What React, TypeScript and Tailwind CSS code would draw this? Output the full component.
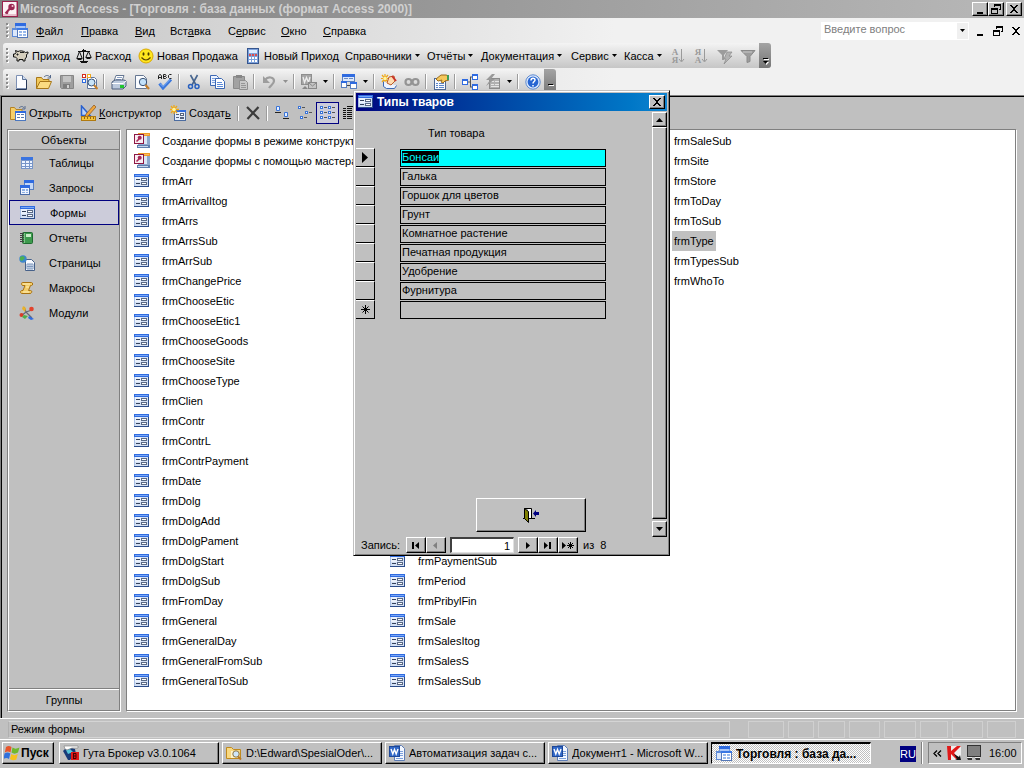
import { useEffect, useRef } from "react";
import type { ReactNode } from "react";

const raised =
  "border border-t-white border-l-white border-r-black border-b-black shadow-[inset_-1px_-1px_0_#808080] bg-[#c0c0c0]";

function Icon({ children, size = 16 }: { children: ReactNode; size?: number }) {
  return (
    <svg width={size} height={size} viewBox="0 0 16 16" aria-hidden="true" className="shrink-0">
      {children}
    </svg>
  );
}

const FormIcon = () => (
  <Icon>
    <path d="M0 1h15v13H0z" fill="#a9c0e6" />
    <path d="M1 4h13v9H1z" fill="#d3e0f5" />
    <path d="M1 4h6v5H1z" fill="#eaf1fc" />
    <path d="M0 1h15v3H0z" fill="#2f6be0" />
    <path d="M1 2h13v1H1z" fill="#7aa7f6" />
    <path d="M2 6h4v1H2zM2 10h4v1H2z" fill="#33415c" />
    <path d="M7 5h6v3H7zM7 9h6v3H7z" fill="#5b6a86" />
    <path d="M8 6h4v1H8zM8 10h4v1H8z" fill="#fff" />
    <path d="M0 13h15v1H0zM14 4h1v10h-1z" fill="#2c4d8a" />
  </Icon>
);

const WizardIcon = () => (
  <Icon>
    <path d="M4 0h12v3H4z" fill="#f09a28" />
    <path d="M5 1h10v1H5z" fill="#f9bb62" />
    <path d="M4 3h12v9H4z" fill="#8ea8cc" />
    <path d="M5 3h8v8H5z" fill="#dce7f6" />
    <path d="M3 12h13v3H3z" fill="#5f7fae" />
    <path d="M4 13h10v1H4z" fill="#c9d8ee" />
    <path d="M0 1h10v10H0z" fill="#8c1745" />
    <path d="M1 2h8v8H1z" fill="#f8eef2" />
    <circle cx="5.700" cy="4.800" r="2" fill="#a92858" />
    <path d="M5 6L2.500 8.500" stroke="#a92858" strokeWidth="1.600" />
  </Icon>
);

const AccessIcon = () => (
  <Icon>
    <rect x=".5" y=".5" width="15" height="15" fill="#fbf2f5" stroke="#99204c" />
    <path d="M1 14h14M14.500 1v14" stroke="#d58ca6" />
    <circle cx="9.500" cy="6" r="3.200" fill="#9c2752" />
    <circle cx="10.500" cy="5" r="1" fill="#f3c6d5" />
    <path d="M7.500 8L3.500 12.500M4 11l2 1.500" stroke="#9c2752" strokeWidth="2" />
  </Icon>
);

const DatabaseIcon = () => (
  <Icon>
    <path d="M3 0h11v10H3z" fill="#6f9be6" />
    <path d="M3 0h11v3H3z" fill="#2f6be0" />
    <path d="M4 3h9v6H4z" fill="#a9c6f6" />
    <path d="M0 5h6v9H0z" fill="#5d8ad8" />
    <path d="M1 7h5v6H1z" fill="#dce8fb" />
    <path d="M5 5h11v10H5z" fill="#5478b8" />
    <path d="M5 5h11v2H5z" fill="#3a78e4" />
    <path d="M6 7h9v7H6z" fill="#fff" />
    <path d="M7 8h3v2H7zM11 8h3v2h-3zM7 11h3v2H7zM11 11h3v2h-3z" fill="#98b9ec" />
  </Icon>
);

const TableIcon = () => (
  <Icon>
    <path d="M2 2h12v12H2z" fill="#7795c8" />
    <path d="M2 2h12v3H2z" fill="#3a74e0" />
    <path d="M3 6h3v2H3zM7 6h3v2H7zM11 6h2v2h-2zM3 9h3v2H3zM7 9h3v2H7zM11 9h2v2h-2zM3 12h3v1H3zM7 12h3v1H7zM11 12h2v1h-2z" fill="#eef4ff" />
  </Icon>
);

const QueryIcon = () => (
  <Icon>
    <path d="M5 0h10v10H5z" fill="#5a80c0" />
    <path d="M5 0h10v3H5z" fill="#2f6be0" />
    <path d="M6 3h8v6H6z" fill="#c5d8f6" />
    <path d="M1 5h10v10H1z" fill="#4a6ba6" />
    <path d="M1 5h10v3H1z" fill="#2f6be0" />
    <path d="M2 8h8v6H2z" fill="#eef4ff" />
    <path d="M3 9h3v2H3zM7 9h2v2H7zM3 12h3v1H3zM7 12h2v1H7z" fill="#8eb0e4" />
  </Icon>
);

const ReportIcon = () => (
  <Icon>
    <rect x="3.500" y="2.500" width="10" height="11" rx="1" fill="#3d9a4d" stroke="#1f6b30" />
    <rect x="7" y="4" width="5" height="3" fill="#c9ecc8" />
    <path d="M5.500 3v10" stroke="#7cc686" />
    <path d="M1 3.500h4M1 5.500h4M1 7.500h4M1 9.500h4M1 11.500h4" stroke="#444" />
  </Icon>
);

const PageIcon = () => (
  <Icon>
    <path d="M6.500 4.500h6l3 3v8h-9z" fill="#f7faff" stroke="#476189" />
    <path d="M8 9h6v5H8zM8 11.500h6M10 9v5M12 9v5" fill="none" stroke="#7e98bd" />
    <circle cx="4" cy="4" r="3.700" fill="#3c86cc" />
    <path d="M1 2l3-1 2 2-3 3-2-1z" fill="#4cb050" />
  </Icon>
);

const MacroIcon = () => (
  <Icon>
    <path d="M3.500 2.500h9c1.500 0 1.500 3 0 3h-1l-2 5h2c2 0 1.500 3-.5 3H3c-2 0-2-3 0-3h1l2-5H4c-2 0-2-3-.5-3z" fill="#f3cd6b" stroke="#a87212" />
    <path d="M4 4h7M7 7h3M4 12h6" stroke="#fff0b8" />
  </Icon>
);

const ModuleIcon = () => (
  <Icon>
    <path d="M2 11l5-4 6 6M7 7L5 2M7 7l6-2" stroke="#667" strokeWidth="1.300" fill="none" />
    <path d="M4 1l3 2-1 4-3-3z" fill="#e8b22c" />
    <circle cx="12.500" cy="4" r="2.300" fill="#e2432c" />
    <circle cx="2.500" cy="10" r="2" fill="#d83c28" />
    <path d="M5 10l4 1-3 3-3-2z" fill="#4fae4b" />
    <path d="M10 11l5 3-3 1-3-2z" fill="#2f6be0" />
  </Icon>
);

const PigIcon = () => (
  <Icon>
    <path d="M3 4.500L2.500 2.500 5 3.500C7 2.500 10 2.500 12.500 4.500L15 4v1.500l-1.500 1V9L12 11v2h-2v-1.500H6V13H4v-2.500L2.500 9H.5V6H2z" fill="#d6cfbe" stroke="#111" />
    <path d="M4 6h1v1H4zM7 4.500h4" stroke="#222" />
  </Icon>
);

const ScalesIcon = () => (
  <Icon>
    <path d="M7.500 1v12M2 3.500h12M5 14.500h6M3.500 3.500L1 10M3.500 3.500L6 10M12.500 3.500L10 9M12.500 3.500L15 9" stroke="#111" fill="none" />
    <path d="M0 10h7l-2 2H2zM9 9h7l-2 2h-3zM6 2h4v2H6zM4 13h8v1H4z" fill="#111" />
  </Icon>
);

const SmileIcon = () => (
  <Icon>
    <circle cx="8" cy="8" r="7" fill="#ffe61e" stroke="#d9a800" />
    <ellipse cx="5.500" cy="6" rx="1" ry="1.700" fill="#4a3a00" />
    <ellipse cx="10.500" cy="6" rx="1" ry="1.700" fill="#4a3a00" />
    <path d="M3.500 9.500q4.500 5 9 0" stroke="#5a4200" fill="none" strokeWidth="1.200" />
  </Icon>
);

const CalcIcon = () => (
  <Icon>
    <rect x="2.500" y=".5" width="11" height="15" fill="#7da2dc" stroke="#35558e" />
    <rect x="4" y="2" width="8" height="3" fill="#dcebff" />
    <path d="M4 6h2v2H4zM7 6h2v2H7zM10 6h2v2h-2z" fill="#dc4c4c" />
    <path d="M4 9h2v2H4zM7 9h2v2H7zM10 9h2v2h-2zM4 12h2v2H4zM7 12h2v2H7zM10 12h2v2h-2z" fill="#fff" />
  </Icon>
);

const SortIcon = ({ top, bottom }: { top: string; bottom: string }) => (
  <span className="flex items-center text-[#9a9a9a]">
    <span className="flex flex-col font-['Liberation_Serif',serif] text-[9px] leading-[8px] font-bold">
      <span>{top}</span>
      <span>{bottom}</span>
    </span>
    <svg width="7" height="16" viewBox="0 0 7 16" aria-hidden="true">
      <path d="M3.500 1v12M1 11l2.500 3L6 11" stroke="#9a9a9a" fill="none" />
    </svg>
  </span>
);

const FilterFlashIcon = () => (
  <Icon>
    <path d="M0 2h11L7 7v5H5V7z" fill="#9c9c9c" />
    <path d="M10 4h5l-3 4h3l-8 8 2-5H7z" fill="#b2b2b2" stroke="#8a8a8a" strokeWidth=".7" />
  </Icon>
);

const FilterIcon = () => (
  <Icon>
    <path d="M1 2.500h14L10 8.500v5l-3 1v-6z" fill="#9c9c9c" stroke="#8a8a8a" />
    <path d="M3 4h9" stroke="#c9c9c9" />
  </Icon>
);

const NewPageIcon = () => (
  <Icon>
    <path d="M3.500 1.500h6l4 4v9h-10z" fill="#fbfcff" stroke="#7d90b4" />
    <path d="M9.500 1.500v4h4" fill="#cfdcf2" stroke="#5a7095" />
    <path d="M3 15.500h10.500V6" stroke="#27395a" fill="none" />
  </Icon>
);

const FolderIcon = () => (
  <Icon>
    <path d="M.5 14.500v-11h5l1.500 2h6v3" fill="#f2c95a" stroke="#a7771a" />
    <path d="M.5 14.500L4 7.500h11.500l-3 7z" fill="#fbdc82" stroke="#a7771a" />
    <path d="M8 3c2-2 4-2 6 0M14.500 1v3h-3" stroke="#54698c" fill="none" />
  </Icon>
);

const SaveIcon = () => (
  <Icon>
    <path d="M1.500 1.500h13v13h-12l-1-1z" fill="#9e9e9e" stroke="#868686" />
    <path d="M4 2h8v6H4z" fill="#c4c4c4" />
    <path d="M4 10h7v4H4z" fill="#7e7e7e" />
    <path d="M8 11h2v3H8z" fill="#d0d0d0" />
  </Icon>
);

const FileSearchIcon = () => (
  <Icon>
    <path d="M5.500 3.500h7l2 2v9h-9z" fill="#fff" stroke="#62779c" />
    <path d="M0 0h4v4H0z" fill="#d62b1e" />
    <path d="M5 0h4v4H5z" fill="#f0a81e" />
    <path d="M0 5h4v4H0z" fill="#2f6be0" />
    <path d="M1 1h2v2H1zM6 1h2v2H6zM1 6h2v2H1z" fill="#fff" />
    <circle cx="9.500" cy="8.500" r="3.500" fill="#c9e4f8" stroke="#36517a" />
    <path d="M12 11l3.500 4" stroke="#c5802c" strokeWidth="2" />
  </Icon>
);

const PrintIcon = () => (
  <Icon>
    <path d="M5 1.500h8L11 7H3z" fill="#fff" stroke="#657792" />
    <path d="M6 3.500h5M5 5.500h5" stroke="#8aa0c4" />
    <path d="M1 8l3-2h9l2 1v5l-3 3H1z" fill="#bccadd" stroke="#4d5f7c" />
    <path d="M1 9.500h11l3-2.500" stroke="#fff" fill="none" />
    <path d="M9 11h4v3H9z" fill="#22c52e" />
  </Icon>
);

const PreviewIcon = () => (
  <Icon>
    <path d="M1.500 1.500h8l3 3v10h-11z" fill="#fafcff" stroke="#657792" />
    <circle cx="9" cy="8" r="3.700" fill="#c3e2fa" stroke="#3c5376" />
    <path d="M11.500 11l3.500 4" stroke="#c5802c" strokeWidth="2.200" />
  </Icon>
);

const SpellIcon = () => (
  <Icon>
    <path d="M1.500 5V2l1-1.500h1l1 1.500v3M2 3.500h3M6.500 .5v4h2l1-1-1-1h-2M8.500 2.500l.5-1-.5-1h-2M14.500 .5h-2l-1 1v2l1 1h2" fill="none" stroke="#222" />
    <path d="M2.500 9.500L6 14l8-8.500" fill="none" stroke="#3c78dc" strokeWidth="3" />
    <path d="M3 9.500L6 12.500l7-7" fill="none" stroke="#8bb7f6" />
  </Icon>
);

const CutIcon = () => (
  <Icon>
    <path d="M4.500 1L10 11M11.500 1L6 11" stroke="#47658f" strokeWidth="1.600" />
    <circle cx="4.500" cy="12.500" r="2" fill="none" stroke="#2860bf" strokeWidth="1.500" />
    <circle cx="11" cy="12.500" r="2" fill="none" stroke="#2860bf" strokeWidth="1.500" />
  </Icon>
);

const CopyIcon = () => (
  <Icon>
    <path d="M1.500 1.500h6l2 2v8h-8z" fill="#eef4ff" stroke="#3c68b4" />
    <path d="M3 4.500h4M3 6.500h4M3 8.500h4" stroke="#7ca0dc" />
    <path d="M6.500 4.500h6l3 3v7h-9z" fill="#fff" stroke="#3c68b4" />
    <path d="M8 8.500h5M8 10.500h6M8 12.500h6" stroke="#5c8ad8" />
  </Icon>
);

const PasteIcon = () => (
  <Icon>
    <path d="M1.500 2.500h11v12h-11z" fill="#a2a2a2" stroke="#8a8a8a" />
    <path d="M4 1h6v3H4z" fill="#868686" />
    <path d="M7.500 6.500h6l2 2v7h-8z" fill="#c8c8c8" stroke="#909090" />
    <path d="M9 9.500h4M9 11.500h5M9 13.500h5" stroke="#969696" />
  </Icon>
);

const UndoIcon = () => (
  <Icon>
    <path d="M4 6c3-4 9-3 9 1 0 3-3 4-5 7" stroke="#9d9d9d" strokeWidth="2.200" fill="none" />
    <path d="M2 2v7h7z" fill="#9d9d9d" />
  </Icon>
);

const OfficeLinkIcon = () => (
  <Icon>
    <rect x="0" y="0" width="11" height="11" fill="#8e8e8e" />
    <path d="M1 1h9v9H1z" fill="#a6a6a6" />
    <path d="M2 3l1.500 5.500 2-5 2 5L9 3" stroke="#eee" strokeWidth="1.300" fill="none" />
    <rect x="7.500" y="8.500" width="8" height="6" fill="#c4c4c4" stroke="#888" />
    <path d="M8 9l3.500 3L15 9" stroke="#888" fill="none" />
    <path d="M4 12l3 3H1z" fill="#888" />
  </Icon>
);

const RelationIcon = () => (
  <Icon>
    <path d="M1 0h13v8H1z" fill="#5a80c0" />
    <path d="M1 0h13v3H1z" fill="#2f6be0" />
    <path d="M2 3h11v4H2z" fill="#dbe7fa" />
    <path d="M3 4h4v1H3zM8 4h4v1H8z" fill="#6e8cc0" />
    <path d="M0 7h6v7H0zM9 8h7v7H9z" fill="#5a80c0" />
    <path d="M0 7h6v2H0zM9 8h7v2H9z" fill="#2f6be0" />
    <path d="M1 9h4v4H1zM10 10h5v4h-5z" fill="#fff" />
    <path d="M6 11.500h3" stroke="#444" />
  </Icon>
);

const NewObjectIcon = () => (
  <Icon>
    <path d="M4 0v9M0 4.500h9M1 1l6 7M7 1L1 8" stroke="#f0a818" strokeWidth="1.200" />
    <circle cx="4" cy="4.500" r="1.700" fill="#fff6a0" />
    <path d="M2.500 7.500v5l3 2h8l2-3" fill="#eef4ff" stroke="#3c68b4" />
    <path d="M8 3l5-1 1 5-4 4-4-2z" fill="#ffdcb0" stroke="#bc5c2a" />
    <path d="M11 2l4 5" stroke="#c8332a" strokeWidth="2" />
  </Icon>
);

const LinkIcon = () => (
  <Icon>
    <circle cx="4.500" cy="8" r="3" fill="none" stroke="#949494" strokeWidth="2.200" />
    <circle cx="11.500" cy="8" r="3" fill="none" stroke="#949494" strokeWidth="2.200" />
  </Icon>
);

const PropertiesIcon = () => (
  <Icon>
    <rect x="1.500" y="4.500" width="11" height="11" fill="#f6f9ff" stroke="#4d6894" />
    <path d="M3 9.500h2M6 9.500h5M3 11.500h2M6 11.500h5M3 13.500h2M6 13.500h5" stroke="#5d86c8" />
    <path d="M3 5l5-4h5l3 1v4l-4 1-2 2-2-1 1-2-4 1z" fill="#f5c75a" stroke="#9a6b1c" />
    <path d="M14 1h2v5h-2z" fill="#3f9c55" />
  </Icon>
);

const TreeIcon = () => (
  <Icon>
    <path d="M5 8h4M8.500 3v10M8 3h3M8 13h3" stroke="#555" fill="none" />
    <path d="M0 5h6v6H0zM10 0h6v6h-6zM10 10h6v6h-6z" fill="#2f6be0" />
    <path d="M1 7h4v3H1zM11 2h4v3h-4zM11 12h4v3h-4z" fill="#fff" />
  </Icon>
);

const CodeIcon = () => (
  <Icon>
    <rect x="4.500" y="4.500" width="10" height="10" fill="#b0b0b0" stroke="#8a8a8a" />
    <path d="M6 7.500h3M10 7.500h4M6 10.500h3M10 10.500h4M6 12.500h8" stroke="#e5e5e5" />
    <path d="M7 0L1 6h4l-4 6 9-7H6l4-5z" fill="#989898" />
  </Icon>
);

const HelpIcon = () => (
  <Icon>
    <circle cx="8" cy="8" r="7.200" fill="#dce9fc" stroke="#5d8ad0" />
    <circle cx="8" cy="8" r="5.400" fill="#2765d2" />
    <path d="M6 6.500c0-3 4-3 4-.5C10 7.500 8 7.500 8 9.500M8 11v1.500" stroke="#fff" strokeWidth="1.500" fill="none" />
  </Icon>
);

const OpenObjectIcon = () => (
  <Icon>
    <path d="M.5 14.500v-12h4l1.500 2h6v10z" fill="#f6cf69" stroke="#b58325" />
    <path d="M9 3c2-2 4-2 5 0M15 1v3h-3" stroke="#54698c" fill="none" />
    <path d="M5 6h11v10H5z" fill="#4c78c0" />
    <path d="M6 8h9v7H6z" fill="#fff" />
    <path d="M5 6h11v2H5z" fill="#2f6be0" />
    <path d="M7 9.500h3M11 9.500h3M7 12.500h3M11 12.500h3" stroke="#5a7ab0" />
  </Icon>
);

const DesignIcon = () => (
  <Icon>
    <path d="M1.500 1v9.500H10z" fill="#b9d2fa" stroke="#2a61ce" strokeWidth="1.500" />
    <path d="M14 0l2 2-8 9-3 1 1-3z" fill="#f0a63c" stroke="#86521a" strokeWidth=".7" />
    <rect x="1.500" y="11.500" width="14" height="4" fill="#f4c43a" stroke="#b07a10" />
    <path d="M4.500 12v2M7.500 12v2M10.500 12v2M13.500 12v2" stroke="#946414" />
  </Icon>
);

const CreateIcon = () => (
  <Icon>
    <path d="M4 5h12v11H4z" fill="#4c6ca0" />
    <path d="M5 7h10v8H5z" fill="#e5edfb" />
    <path d="M4 5h12v2H4z" fill="#2f6be0" />
    <path d="M6 9h3v1H6zM6 12h3v1H6zM10 8h4v3h-4zM10 12h4v2h-4z" fill="#55637e" />
    <path d="M11 9h2v1h-2z" fill="#fff" />
    <path d="M4 0v9M0 4.500h9M1 1l6 7M7 1L1 8" stroke="#f0a818" strokeWidth="1.300" />
    <circle cx="4" cy="4.500" r="1.800" fill="#fff6a0" />
  </Icon>
);

const DeleteIcon = () => (
  <Icon>
    <path d="M2 2l12 12M13.500 2L2.500 14" stroke="#3c3c3c" strokeWidth="2.200" />
  </Icon>
);

const MiniItem = ({ x, y }: { x: number; y: number }) => (
  <g>
    <path d={`M${x} ${y}h3v3h-3z`} fill="#3a74d8" />
    <path d={`M${x + 1} ${y + 1}h1v1h-1z`} fill="#fff" />
    <path d={`M${x + 4} ${y + 1}h3v1h-3z`} fill="#555" />
  </g>
);

const LargeViewIcon = () => (
  <Icon>
    <path d="M2.500 1.500h3v4h-3zM10.500 7.500h3v4h-3z" fill="#e6f0ff" stroke="#3a74d8" />
    <path d="M1 7.500h6M9 13.500h6" stroke="#222" />
  </Icon>
);

const SmallViewIcon = () => (
  <Icon>
    <MiniItem x={1} y={1} />
    <MiniItem x={8} y={6} />
    <MiniItem x={3} y={11} />
  </Icon>
);

const ListViewIcon = () => (
  <Icon>
    <MiniItem x={0} y={1} />
    <MiniItem x={8} y={1} />
    <MiniItem x={0} y={6} />
    <MiniItem x={8} y={6} />
    <MiniItem x={0} y={11} />
    <MiniItem x={8} y={11} />
  </Icon>
);

const DetailViewIcon = () => (
  <Icon>
    <path d="M4 1.500h12M0 3.500h3M4 3.500h5M10 3.500h6M0 5.500h3M4 5.500h5M10 5.500h6M0 7.500h3M4 7.500h5M10 7.500h6M0 9.500h3M4 9.500h5M10 9.500h6M0 11.500h3M4 11.500h5M10 11.500h6M0 13.500h3M4 13.500h5M10 13.500h6" stroke="#111" />
  </Icon>
);

const WordIcon = () => (
  <Icon>
    <path d="M5.500.5h7l3 3v12h-10z" fill="#f3f7ff" stroke="#5d7db6" />
    <path d="M11 6.500h3M11 8.500h3M11 10.500h3M7 13.500h7" stroke="#7ca0dc" />
    <rect x=".5" y="1.500" width="10" height="10" fill="#3168c8" stroke="#1d4797" />
    <path d="M2 4l1.800 5L5.500 4.500 7.200 9 9 4" stroke="#fff" strokeWidth="1.400" fill="none" />
  </Icon>
);

const ExplorerIcon = () => (
  <Icon>
    <path d="M.5 13.500v-11h5l2 2h7v9z" fill="#f9d981" stroke="#c08a1e" />
    <path d="M5 6h8v7H5z" fill="#fff3c8" />
    <circle cx="10" cy="9" r="3.200" fill="#cfe7fa" stroke="#8c7440" />
    <path d="M12 11.500l3 3" stroke="#b87824" strokeWidth="2" />
  </Icon>
);

const BrokerIcon = () => (
  <Icon>
    <path d="M0 6l4-4 8 2 1 5-6 6H5z" fill="#173a78" />
    <path d="M3 5l4-1 3 3-5 2z" fill="#54c6d8" />
    <path d="M1 1h14v2H9L4 5 2 4z" fill="#fff" stroke="#777" strokeWidth=".6" />
    <path d="M8 7h8v8H8z" fill="#e01818" />
    <path d="M10.500 8.500v5M10 8.500h3v2.500h-3M10 13.500h3V11" stroke="#400" fill="none" />
  </Icon>
);

const WindowsIcon = () => (
  <Icon>
    <path d="M2 2c2-1.500 3.500-1.500 5.500 0L6.500 7.500C4.500 6 3 6 .8 7.500z" fill="#e8542a" />
    <path d="M8.500 2.500c2 1.500 4 1.500 7 0l-1.500 5c-2.500 1.500-4.500 1.500-6.500 0z" fill="#6eb92c" />
    <path d="M.5 8.500c2-1.500 4-1.500 5.800 0L5 14c-2-1.500-3.500-1.500-5.500 0z" fill="#2f70dc" />
    <path d="M7.300 9c2 1.500 4 1.500 6.500 0l-1.500 5.500c-2 1-4 1-6.300-.5z" fill="#f6c11c" />
  </Icon>
);

const Caret = ({ muted = false }: { muted?: boolean }) => (
  <svg width="5" height="3" viewBox="0 0 5 3" aria-hidden="true" className="shrink-0">
    <path d="M0 0h5L2.500 3z" fill={muted ? "#909090" : "#000"} />
  </svg>
);

const glyphs = {
  min: "M2 8h6v2H2z",
  restore: "M3 0h7v6H8V5h1V2H4v1H3zM0 4h7v6H0zM1 6v3h5V6z",
  close: "M1 1h2v1h1v1h2V2h1V1h2v1H8v1H7v1H6v2h1v1h1v1h1v1H7V8H6V7H4v1H3v1H1V8h1V7h1V6h1V4H3V3H2V2H1z",
};

const Glyph = ({ kind }: { kind: keyof typeof glyphs }) => (
  <svg width="10" height="10" viewBox="0 0 10 10" aria-hidden="true">
    <path d={glyphs[kind]} fillRule="evenodd" />
  </svg>
);

const Grip = () => (
  <svg width="3" height="16" viewBox="0 0 3 16" aria-hidden="true" className="mx-[6px] mr-[4px] shrink-0">
    {[0, 4, 8, 12].map((y) => (
      <g key={y}>
        <rect x="1" y={y + 1} width="2" height="2" fill="#fff" />
        <rect x="0" y={y} width="2" height="2" fill="#8c8c8c" />
      </g>
    ))}
  </svg>
);

const Sep = () => (
  <div className="flex h-full w-[6px] shrink-0 items-center justify-center">
    <div className="h-[15px] w-[2px] border-l border-l-[#9c9c9c] bg-white" />
  </div>
);

const ToolbarEnd = ({ arrow = false }: { arrow?: boolean }) => (
  <button
    aria-label="Параметры панели"
    className="flex h-full w-[12px] shrink-0 items-end justify-center rounded-r-[3px] bg-linear-to-b from-[#a4a4a4] to-[#767676] pb-[3px]"
  >
    <svg width="7" height="7" viewBox="0 0 7 7" aria-hidden="true">
      <path d="M2 1h5v1H2z" fill="#fff" />
      <path d="M1 0h5v1H1z" />
      {arrow && <path d="M2 4h5L4.500 7z" fill="#fff" />}
      {arrow && <path d="M1 3h5L3.500 6z" />}
    </svg>
  </button>
);

function Tool({ label, children }: { label: string; children: ReactNode }) {
  return (
    <button aria-label={label} className="flex h-full w-[23px] shrink-0 items-center justify-center">
      {children}
    </button>
  );
}

function Drop({ muted = false }: { muted?: boolean }) {
  return (
    <button aria-label="Список" className="flex h-full w-[11px] shrink-0 items-center justify-center">
      <Caret muted={muted} />
    </button>
  );
}

const menu: [string, string, string, string][] = [
  ["", "Ф", "айл", "w-[45px]"],
  ["", "П", "равка", "w-[54px]"],
  ["", "В", "ид", "w-[35px]"],
  ["Вст", "а", "вка", "w-[58px]"],
  ["С", "е", "рвис", "w-[53px]"],
  ["", "О", "кно", "w-[42px]"],
  ["", "С", "правка", "w-[60px]"],
];

const commands: [string, ReactNode, string][] = [
  ["Приход", <PigIcon key="i" />, "w-[63px]"],
  ["Расход", <ScalesIcon key="i" />, "w-[62px]"],
  ["Новая Продажа", <SmileIcon key="i" />, "w-[107px]"],
  ["Новый Приход", <CalcIcon key="i" />, "w-[100px]"],
];

const dropMenus: [string, string][] = [
  ["Справочники", "w-[82px]"],
  ["Отчёты", "w-[54px]"],
  ["Документация", "w-[90px]"],
  ["Сервис", "w-[53px]"],
  ["Касса", "w-[43px]"],
];

const objects: [string, ReactNode][] = [
  ["Таблицы", <TableIcon key="i" />],
  ["Запросы", <QueryIcon key="i" />],
  ["Формы", <FormIcon key="i" />],
  ["Отчеты", <ReportIcon key="i" />],
  ["Страницы", <PageIcon key="i" />],
  ["Макросы", <MacroIcon key="i" />],
  ["Модули", <ModuleIcon key="i" />],
];

const firstColumn = [
  "frmArr", "frmArrivalItog", "frmArrs", "frmArrsSub", "frmArrSub", "frmChangePrice", "frmChooseEtic",
  "frmChooseEtic1", "frmChooseGoods", "frmChooseSite", "frmChooseType", "frmClien", "frmContr", "frmContrL",
  "frmContrPayment", "frmDate", "frmDolg", "frmDolgAdd", "frmDolgPament", "frmDolgStart", "frmDolgSub",
  "frmFromDay", "frmGeneral", "frmGeneralDay", "frmGeneralFromSub", "frmGeneralToSub",
];
const secondColumn = ["frmPaymentSub", "frmPeriod", "frmPribylFin", "frmSale", "frmSalesItog", "frmSalesS", "frmSalesSub"];
const thirdColumn = ["frmSaleSub", "frmSite", "frmStore", "frmToDay", "frmToSub", "frmType", "frmTypesSub", "frmWhoTo"];

const goods = [
  "Бонсаи", "Галька", "Горшок для цветов", "Грунт", "Комнатное растение", "Печатная продукция", "Удобрение", "Фурнитура", "",
];

function ListEntry({ name, icon, selected = false }: { name: string; icon?: ReactNode; selected?: boolean }) {
  return (
    <li>
      <button className="flex h-5 items-center gap-[10px] whitespace-nowrap">
        {icon ?? <FormIcon />}
        <span className={selected ? "bg-[#c0c0c0] px-[2px] leading-5" : "px-[2px] leading-5"}>{name}</span>
      </button>
    </li>
  );
}

function TitleBar() {
  return (
    <header className="flex h-[18px] items-center gap-[2px] bg-linear-to-r from-[#808080] to-[#b8b8b8] px-[2px]">
      <AccessIcon />
      <h1 className="flex-1 truncate text-[12px] font-bold text-[#d0d0d0]">
        Microsoft Access - [Торговля : база данных (формат Access 2000)]
      </h1>
      <div className="flex">
        <button aria-label="Свернуть" className={`flex h-[14px] w-4 items-center justify-center ${raised}`}>
          <Glyph kind="min" />
        </button>
        <button aria-label="Восстановить" className={`flex h-[14px] w-4 items-center justify-center ${raised}`}>
          <Glyph kind="restore" />
        </button>
        <button aria-label="Закрыть" className={`ml-[2px] flex h-[14px] w-4 items-center justify-center ${raised}`}>
          <Glyph kind="close" />
        </button>
      </div>
    </header>
  );
}

function MenuBar() {
  return (
    <nav className="flex h-[25px] items-center">
      <Grip />
      <div className="-ml-px flex"><DatabaseIcon /></div>
      <div className="ml-2 flex flex-1">
        {menu.map(([before, key, after, width]) => (
          <button key={before + key + after} className={`text-left whitespace-nowrap ${width}`}>
            {before}
            <u className="underline-offset-1">{key}</u>
            {after}
          </button>
        ))}
      </div>
      <div className="flex h-[18px] bg-white">
        <input
          aria-label="Введите вопрос"
          placeholder="Введите вопрос"
          className="w-[135px] bg-transparent px-[3px] pb-1 outline-none placeholder:text-[#808080]"
        />
        <button aria-label="Показать вопросы" className="m-px flex w-[11px] items-center justify-center bg-[#f0f0f0]">
          <Caret />
        </button>
      </div>
      <div className="flex gap-[8px] pr-[3px] pl-[6px]">
        <button aria-label="Свернуть окно"><Glyph kind="min" /></button>
        <button aria-label="Восстановить окно"><Glyph kind="restore" /></button>
        <button aria-label="Закрыть окно"><Glyph kind="close" /></button>
      </div>
    </nav>
  );
}

function CommandBar() {
  return (
    <div className="ml-[3px] flex h-[25px] w-fit items-center rounded-[3px] bg-linear-to-b from-[#f4f4f4] to-[#c6c6c6]">
      <div className="-ml-[3px] flex"><Grip /></div>
      {commands.map(([label, icon, width]) => (
        <button key={label} className={`flex items-center gap-[3px] whitespace-nowrap ${width}`}>
          {icon}
          {label}
        </button>
      ))}
      {dropMenus.map(([label, width]) => (
        <button key={label} className={`flex items-center gap-[3px] whitespace-nowrap ${width}`}>
          {label}
          <Caret />
        </button>
      ))}
      <Tool label="Сортировка по возрастанию"><SortIcon top="А" bottom="Я" /></Tool>
      <Tool label="Сортировка по убыванию"><SortIcon top="Я" bottom="А" /></Tool>
      <Tool label="Фильтр по выделенному"><FilterFlashIcon /></Tool>
      <Tool label="Применить фильтр"><FilterIcon /></Tool>
      <ToolbarEnd arrow />
    </div>
  );
}

function StandardBar() {
  return (
    <div className="mt-px ml-[3px] flex h-[25px] w-fit items-center rounded-[3px] bg-linear-to-b from-[#f4f4f4] to-[#c6c6c6]">
      <div className="-mr-1 -ml-[3px] flex"><Grip /></div>
      <Tool label="Создать файл"><NewPageIcon /></Tool>
      <Tool label="Открыть файл"><FolderIcon /></Tool>
      <Tool label="Сохранить"><SaveIcon /></Tool>
      <Tool label="Найти файл"><FileSearchIcon /></Tool>
      <Sep />
      <Tool label="Печать"><PrintIcon /></Tool>
      <Tool label="Просмотр"><PreviewIcon /></Tool>
      <Tool label="Орфография"><SpellIcon /></Tool>
      <Sep />
      <Tool label="Вырезать"><CutIcon /></Tool>
      <Tool label="Копировать"><CopyIcon /></Tool>
      <Tool label="Вставить"><PasteIcon /></Tool>
      <Sep />
      <Tool label="Отменить"><UndoIcon /></Tool>
      <Drop muted />
      <Sep />
      <Tool label="Связи с Office"><OfficeLinkIcon /></Tool>
      <Drop />
      <Sep />
      <Tool label="Анализ"><RelationIcon /></Tool>
      <Drop />
      <Sep />
      <Tool label="Новый объект"><NewObjectIcon /></Tool>
      <Tool label="Связь"><LinkIcon /></Tool>
      <Sep />
      <Tool label="Свойства"><PropertiesIcon /></Tool>
      <Sep />
      <Tool label="Схема данных"><TreeIcon /></Tool>
      <Tool label="Программа"><CodeIcon /></Tool>
      <Drop />
      <Sep />
      <Tool label="Справка"><HelpIcon /></Tool>
      <ToolbarEnd />
    </div>
  );
}

function DatabaseToolbar() {
  return (
    <div className="flex h-[32px] shrink-0 items-center pl-2">
      <button className="flex w-[70px] items-center gap-[3px] whitespace-nowrap">
        <OpenObjectIcon />
        <span>О<u>т</u>крыть</span>
      </button>
      <button className="flex w-[90px] items-center gap-[3px] whitespace-nowrap">
        <DesignIcon />
        <span><u>К</u>онструктор</span>
      </button>
      <button className="flex w-[65px] items-center gap-[3px] whitespace-nowrap">
        <CreateIcon />
        <span>Создат<u>ь</u></span>
      </button>
      <Sep />
      <Tool label="Удалить"><DeleteIcon /></Tool>
      <Sep />
      <Tool label="Крупные значки"><LargeViewIcon /></Tool>
      <Tool label="Мелкие значки"><SmallViewIcon /></Tool>
      <button
        aria-label="Список"
        aria-pressed="true"
        className="flex h-[22px] w-[23px] shrink-0 items-center justify-center border border-[#000080] bg-[#ccccda]"
      >
        <ListViewIcon />
      </button>
      <Tool label="Таблица"><DetailViewIcon /></Tool>
    </div>
  );
}

function Sidebar() {
  return (
    <aside className="flex w-[114px] shrink-0 flex-col border border-t-[#808080] border-r-white border-b-white border-l-[#808080]">
      <div className="flex flex-1 flex-col border border-t-white border-r-[#808080] border-b-[#808080] border-l-white">
        <button className="h-[19px] shrink-0 border-b border-b-[#808080]">Объекты</button>
        <ul className="flex-1">
          {objects.map(([name, icon]) => (
            <li key={name}>
              <button
                className={
                  name === "Формы"
                    ? "flex h-[25px] w-full items-center gap-[14px] border border-[#000080] bg-[#ccccda] pl-[10px]"
                    : "flex h-[25px] w-full items-center gap-[14px] pl-[10px]"
                }
              >
                {icon}
                {name}
              </button>
            </li>
          ))}
        </ul>
        <button className="h-[21px] shrink-0 border-t border-t-white shadow-[0_-1px_0_#808080]">Группы</button>
      </div>
    </aside>
  );
}

function ObjectList() {
  return (
    <div className="grid flex-1 grid-cols-[256px_256px_1fr] items-start border border-t-[#808080] border-r-white border-b-white border-l-[#808080] bg-white pt-px pl-[7px] shadow-[inset_-1px_-1px_0_#808080]">
      <ul>
        <ListEntry name="Создание формы в режиме конструктора" icon={<WizardIcon />} />
        <ListEntry name="Создание формы с помощью мастера" icon={<WizardIcon />} />
        {firstColumn.map((name) => <ListEntry key={name} name={name} />)}
      </ul>
      <ul className="pt-[420px]">
        {secondColumn.map((name) => <ListEntry key={name} name={name} />)}
      </ul>
      <ul>
        {thirdColumn.map((name) => <ListEntry key={name} name={name} selected={name === "frmType"} />)}
      </ul>
    </div>
  );
}

const navPaths = {
  first: "M2 1h2v7H2zM9 1v7L5 4.500z",
  prev: "M7 1v7L3 4.500z",
  next: "M4 1v7l4-3.500z",
  last: "M2 1v7l4-3.500zM7 1h2v7H7z",
  add: "M0 1v7l4-3.500zM8 1h1v7H8zM5 4h7v1H5zM6 2h1v1H6zM10 2h1v1h-1zM6 6h1v1H6zM10 6h1v1h-1zM7 3h3v3H7z",
};

function NavButton({ kind, label, muted = false }: { kind: keyof typeof navPaths; label: string; muted?: boolean }) {
  return (
    <button aria-label={label} className={`flex h-4 w-5 shrink-0 items-center justify-center ${raised}`}>
      <svg width="12" height="9" viewBox="0 0 12 9" aria-hidden="true">
        <path d={navPaths[kind]} fill={muted ? "#808080" : "#000"} />
      </svg>
    </button>
  );
}

function GoodsDialog() {
  const first = useRef<HTMLInputElement>(null);
  useEffect(() => {
    first.current?.focus();
    first.current?.select();
  }, []);

  return (
    <section
      role="dialog"
      aria-labelledby="goods-title"
      className="absolute top-[90px] left-[353px] flex h-[466px] w-[317px] flex-col border border-t-[#c0c0c0] border-r-black border-b-black border-l-[#c0c0c0] bg-[#c0c0c0] p-[2px] shadow-[inset_1px_1px_0_#fff,inset_-1px_-1px_0_#808080]"
    >
      <div className="flex h-[18px] shrink-0 items-center gap-[3px] bg-linear-to-r from-[#000080] to-[#1084d0] px-[2px]">
        <FormIcon />
        <h2 id="goods-title" className="flex-1 text-[12px] leading-[14px] font-bold text-white">Типы тваров</h2>
        <button aria-label="Закрыть форму" className={`flex h-[14px] w-4 items-center justify-center ${raised}`}>
          <Glyph kind="close" />
        </button>
      </div>
      <div className="flex flex-1">
        <div className="flex flex-1 flex-col">
          <div className="pt-[15px] pl-[72px] leading-[14px]">Тип товара</div>
          <ul className="pt-2">
            {goods.map((name, i) => (
              <li key={name || "new"} className="flex h-[19px] items-center gap-[25px]">
                <button
                  aria-label={`Запись ${i + 1}`}
                  className="flex h-[19px] w-[19px] items-center justify-center border-t border-r border-b border-t-white border-r-black border-b-black"
                >
                  {i === 0 && <svg width="6" height="11" viewBox="0 0 6 11" aria-hidden="true"><path d="M0 0v11l6-5.500z" /></svg>}
                  {i === 8 && <svg width="9" height="9" viewBox="0 0 9 9" aria-hidden="true"><path d="M4.500 0v9M0 4.500h9M1.500 1.500l6 6M7.500 1.500l-6 6" stroke="#000" /></svg>}
                </button>
                <input
                  ref={i === 0 ? first : undefined}
                  aria-label={`Тип товара ${i + 1}`}
                  defaultValue={name}
                  className={
                    i === 0
                      ? "h-[18px] w-[206px] border border-black bg-[#00ffff] px-px pb-[2px] outline-none selection:bg-black selection:text-[#00ffff]"
                      : "h-[18px] w-[206px] border border-black bg-transparent px-px pb-[2px] outline-none"
                  }
                />
              </li>
            ))}
          </ul>
          <div className="flex flex-1 items-end justify-end pr-[66px] pb-[5px]">
            <button aria-label="Выход" className={`flex h-[34px] w-[110px] items-center justify-center ${raised}`}>
              <svg width="16" height="16" viewBox="0 0 16 16" aria-hidden="true">
                <path d="M1.500 11V1.500h7V11M0 11.500h12" stroke="#000" fill="none" />
                <path d="M5 2h3v9H5z" fill="#fff" />
                <path d="M1.500 1.500l4 3v11l-4-4z" fill="#808000" stroke="#000" />
                <path d="M10 6.500L13 3v2h3v3h-3v2z" fill="#000080" />
              </svg>
            </button>
          </div>
        </div>
        <div className="flex w-[15px] flex-col">
          <button aria-label="Вверх" className={`mt-px flex h-[15px] shrink-0 items-center justify-center ${raised}`}>
            <svg width="7" height="4" viewBox="0 0 7 4" aria-hidden="true"><path d="M0 4h7L3.500 0z" /></svg>
          </button>
          <div className={`flex-1 ${raised}`} />
          <button aria-label="Вниз" className={`mt-[2px] flex h-4 shrink-0 items-center justify-center ${raised}`}>
            <svg width="7" height="4" viewBox="0 0 7 4" aria-hidden="true"><path d="M0 0h7L3.500 4z" /></svg>
          </button>
        </div>
      </div>
      <div className="flex h-4 shrink-0 items-center">
        <label htmlFor="record" className="w-[50px] pl-[5px]">Запись:</label>
        <NavButton kind="first" label="Первая запись" />
        <NavButton kind="prev" label="Предыдущая запись" muted />
        <input
          id="record"
          defaultValue="1"
          className="mx-1 h-4 w-16 border border-t-2 border-l-2 border-t-[#404040] border-r-[#e0e0e0] border-b-[#e0e0e0] border-l-[#404040] bg-white px-[3px] text-right outline-none"
        />
        <NavButton kind="next" label="Следующая запись" />
        <NavButton kind="last" label="Последняя запись" />
        <NavButton kind="add" label="Новая запись" />
        <span className="pl-[5px] whitespace-pre">из  8</span>
      </div>
    </section>
  );
}

const statusWidths = ["w-[36px]", "w-[26px]", "w-[27px]", "w-[31px]", "w-[32px]", "w-[28px]", "w-[31px]", "w-[29px]"];

function StatusBar() {
  return (
    <footer className="flex h-[21px] shrink-0 items-center gap-1 border-t border-t-white pr-2 pl-2">
      <div className="mr-[14px] flex h-[17px] flex-1 items-center border border-[#d4d4d4] border-l-[#b0b0b0] px-[2px]">Режим формы</div>
      {statusWidths.map((width, i) => (
        <div key={i} className={`h-[17px] border border-[#d0d0d0] ${width}`} />
      ))}
    </footer>
  );
}

const tasks: [string, ReactNode][] = [
  ["Гута Брокер v3.0.1064", <BrokerIcon key="i" />],
  ["D:\\Edward\\SpesialOder\\...", <ExplorerIcon key="i" />],
  ["Автоматизация задач с...", <WordIcon key="i" />],
  ["Документ1 - Microsoft W...", <WordIcon key="i" />],
];

function TaskBar() {
  return (
    <div className="flex h-[29px] shrink-0 items-start border-t border-t-white px-[2px] pt-[2px]">
      <button className={`flex h-[22px] w-[52px] shrink-0 items-center gap-px pl-px text-[12px] font-bold ${raised}`}>
        <WindowsIcon />
        Пуск
      </button>
      <div className="ml-[5px] flex min-w-0 flex-1 gap-[3px]">
        {tasks.map(([label, icon]) => (
          <button key={label} className={`flex h-[22px] max-w-[160px] min-w-0 flex-1 items-center gap-1 px-[3px] whitespace-nowrap ${raised}`}>
            {icon}
            <span className="truncate">{label}</span>
          </button>
        ))}
        <button className="flex h-[22px] max-w-[160px] min-w-0 flex-1 items-center gap-1 border border-t-2 border-t-black border-r-white border-b-white border-l-black bg-[repeating-conic-gradient(#fff_0_25%,#c0c0c0_0_50%)] bg-size-[2px_2px] px-1 text-[12px] font-bold whitespace-nowrap">
          <DatabaseIcon />
          <span className="truncate">Торговля : база да...</span>
        </button>
      </div>
      <button aria-label="Язык" className="mt-1 h-4 w-4 shrink-0 bg-[#000080] text-center leading-4 text-white">RU</button>
      <div className="mx-[5px] h-[22px] w-[2px] border-l border-l-[#808080] bg-white" />
      <div className="flex h-[22px] w-[94px] shrink-0 items-center gap-1 border border-t-[#808080] border-r-white border-b-white border-l-[#808080] pl-1">
        <button aria-label="Показать значки" className="w-[9px]">
          <svg width="9" height="7" viewBox="0 0 9 7" aria-hidden="true"><path d="M4 .5l-3 3 3 3M8 .5l-3 3 3 3" stroke="#000" strokeWidth="1.300" fill="none" /></svg>
        </button>
        <Icon>
          <rect x="3" y="1" width="12" height="14" fill="#eee" />
          <path d="M1 1h4v5l6-5h4L8 8l5 6h-3L5 9v6H2z" fill="#e01818" />
          <path d="M8 9l5 3 1-2 1 5h-6l2-1z" fill="#111" />
        </Icon>
        <Icon>
          <rect x="1.500" y=".5" width="13" height="11" fill="#808080" stroke="#333" />
          <path d="M1 13h5v2H2zM9 13h5v2h-4z" fill="#333" />
          <path d="M1 12h5v1H1zM9 12h5v1H9z" fill="#eee" />
        </Icon>
        <time className="ml-[3px]">16:00</time>
      </div>
    </div>
  );
}

export default function App() {
  return (
    <div className="relative flex min-h-screen flex-col bg-[#c0c0c0] font-['Liberation_Sans',Arial,sans-serif] text-[11px] leading-[14px] text-black">
      <TitleBar />
      <div className="h-[77px] shrink-0 bg-linear-to-r from-[#c4c4c4] to-[#f1f1f1] to-60%">
        <MenuBar />
        <CommandBar />
        <StandardBar />
      </div>
      <main className="flex flex-1 flex-col border-t border-l border-t-[#808080] border-l-[#808080]">
        <div className="flex flex-1 flex-col border-t border-l border-t-black border-l-black pb-[6px]">
          <DatabaseToolbar />
          <div className="flex flex-1 gap-[5px] pr-[7px] pl-[5px]">
            <Sidebar />
            <ObjectList />
          </div>
        </div>
      </main>
      <StatusBar />
      <TaskBar />
      <GoodsDialog />
    </div>
  );
}
